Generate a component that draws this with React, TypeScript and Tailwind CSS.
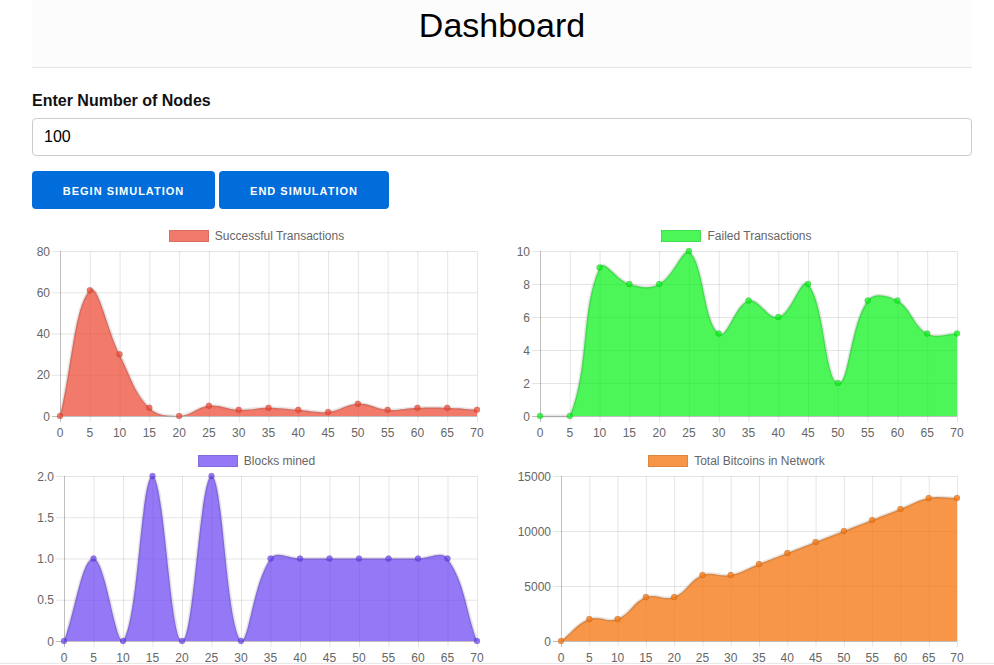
import React from 'react';

type ChartProps = {
    title: string;
    data: number[];
    max: number;
    ticks: string[];
    fill: string;
    left: number; // plot left edge, depends on y label width
};

const LABELS = Array.from({ length: 15 }, (_, i) => String(i * 5));
const FONT = "'Liberation Sans', Arial, Helvetica, sans-serif";

const Chart: React.FC<ChartProps> = ({ title, data, max, ticks, fill, left }) => {
    const right = 445;
    const top = 6;
    const bottom = 171;
    const n = data.length;
    const xs = data.map((_, i) => left + ((right - left) * i) / (n - 1));
    const ys = data.map((v) => bottom - ((bottom - top) * v) / max);

    // same spline as chart.js (tension 0.4), control points kept inside the area
    const t = 0.4;
    const clamp = (v: number) => Math.min(bottom, Math.max(top, v));
    const cps = data.map((_, i) => {
        const p = i > 0 ? i - 1 : i;
        const q = i < n - 1 ? i + 1 : i;
        const d01 = Math.hypot(xs[i] - xs[p], ys[i] - ys[p]);
        const d12 = Math.hypot(xs[q] - xs[i], ys[q] - ys[i]);
        const s01 = d01 / (d01 + d12) || 0;
        const s12 = d12 / (d01 + d12) || 0;
        const fa = t * s01;
        const fb = t * s12;
        return {
            px: xs[i] - fa * (xs[q] - xs[p]),
            py: clamp(ys[i] - fa * (ys[q] - ys[p])),
            nx: xs[i] + fb * (xs[q] - xs[p]),
            ny: clamp(ys[i] + fb * (ys[q] - ys[p])),
        };
    });

    let line = `M${xs[0]},${ys[0]}`;
    for (let i = 0; i < n - 1; i++) {
        line += ` C${cps[i].nx},${cps[i].ny} ${cps[i + 1].px},${cps[i + 1].py} ${xs[i + 1]},${ys[i + 1]}`;
    }
    const area = `M${xs[0]},${bottom} L${xs[0]},${ys[0]} ${line.slice(line.indexOf('C'))} L${xs[n - 1]},${bottom} Z`;

    return (
        <div className="flex flex-col">
            <div className="h-[20px] pt-[5px] flex justify-center items-start gap-[6px]">
                <span className="w-[40px] h-[12px] border border-[rgba(0,0,0,0.1)]" style={{ background: fill }} />
                <span className="text-[12px] leading-[12px] text-[#666]">{title}</span>
            </div>
            <svg width={449} height={205} className="overflow-visible" style={{ fontFamily: FONT }}>
                {ticks.map((label, i) => {
                    const gy = bottom - ((bottom - top) * i) / (ticks.length - 1);
                    return (
                        <g key={label}>
                            <line
                                x1={left - 8}
                                x2={right}
                                y1={gy + 0.5}
                                y2={gy + 0.5}
                                stroke={i === 0 ? 'rgba(0,0,0,0.25)' : 'rgba(0,0,0,0.1)'}
                            />
                            <text x={left - 10} y={gy + 4.5} textAnchor="end" fontSize={12} fill="#666">
                                {label}
                            </text>
                        </g>
                    );
                })}
                {xs.map((x, i) => (
                    <g key={i}>
                        <line
                            x1={x + 0.5}
                            x2={x + 0.5}
                            y1={top}
                            y2={bottom + 6}
                            stroke={i === 0 ? 'rgba(0,0,0,0.25)' : 'rgba(0,0,0,0.1)'}
                        />
                        <text x={x} y={192} textAnchor="middle" fontSize={12} fill="#666">
                            {LABELS[i]}
                        </text>
                    </g>
                ))}
                <path d={area} fill={fill} />
                <path d={line} fill="none" stroke="rgba(0,0,0,0.1)" strokeWidth={3} />
                {xs.map((x, i) => (
                    <circle key={i} cx={x} cy={ys[i]} r={3} fill={fill} stroke="rgba(0,0,0,0.1)" strokeWidth={1} />
                ))}
            </svg>
        </div>
    );
};

export default function App() {
    return (
        <div className="bg-white h-[664px] overflow-hidden border-b border-[#e8e8e8]" style={{ fontFamily: FONT }}>
            <div className="w-[940px] ml-[32px]">
                <header className="h-[68px] bg-[#fcfcfc] border-b border-[#e6e6e6] pt-[6px]">
                    <h1 className="text-[34px] leading-[39px] text-center text-black font-normal">Dashboard</h1>
                </header>

                <div className="mt-[21px] text-[16px] leading-[24px] font-bold text-[#111]">Enter Number of Nodes</div>
                <input
                    defaultValue="100"
                    className="mt-[5px] block w-full h-[38px] border border-[#cccccc] rounded-[4px] px-[11px] text-[16px] text-black outline-none"
                />

                <div className="mt-[15px] flex gap-[4px]">
                    <button className="w-[183px] h-[38px] pt-[2px] rounded-[4px] bg-[#006ddb] text-white text-[11px] font-bold tracking-[1px] uppercase">
                        Begin Simulation
                    </button>
                    <button className="w-[170px] h-[38px] pt-[2px] rounded-[4px] bg-[#006ddb] text-white text-[11px] font-bold tracking-[1px] uppercase">
                        End Simulation
                    </button>
                </div>

                <div className="mt-[16px] grid grid-cols-[449px_449px] gap-x-[31px]">
                    <Chart
                        title="Successful Transactions"
                        data={[0, 61, 30, 4, 0, 5, 3, 4, 3, 2, 6, 3, 4, 4, 3]}
                        max={80}
                        ticks={['0', '20', '40', '60', '80']}
                        fill="rgba(235,70,50,0.72)"
                        left={28}
                    />
                    <Chart
                        title="Failed Transactions"
                        data={[0, 0, 9, 8, 8, 10, 5, 7, 6, 8, 2, 7, 7, 5, 5]}
                        max={10}
                        ticks={['0', '2', '4', '6', '8', '10']}
                        fill="rgba(0,242,17,0.7)"
                        left={28}
                    />
                    <Chart
                        title="Blocks mined"
                        data={[0, 1, 0, 2, 0, 2, 0, 1, 1, 1, 1, 1, 1, 1, 0]}
                        max={2}
                        ticks={['0', '0.5', '1.0', '1.5', '2.0']}
                        fill="rgba(100,60,240,0.69)"
                        left={32}
                    />
                    <Chart
                        title="Total Bitcoins in Network"
                        data={[0, 2000, 2000, 4000, 4000, 6000, 6000, 7000, 8000, 9000, 10000, 11000, 12000, 13000, 13000]}
                        max={15000}
                        ticks={['0', '5000', '10000', '15000']}
                        fill="rgba(245,120,20,0.78)"
                        left={49}
                    />
                </div>
            </div>
        </div>
    );
}
